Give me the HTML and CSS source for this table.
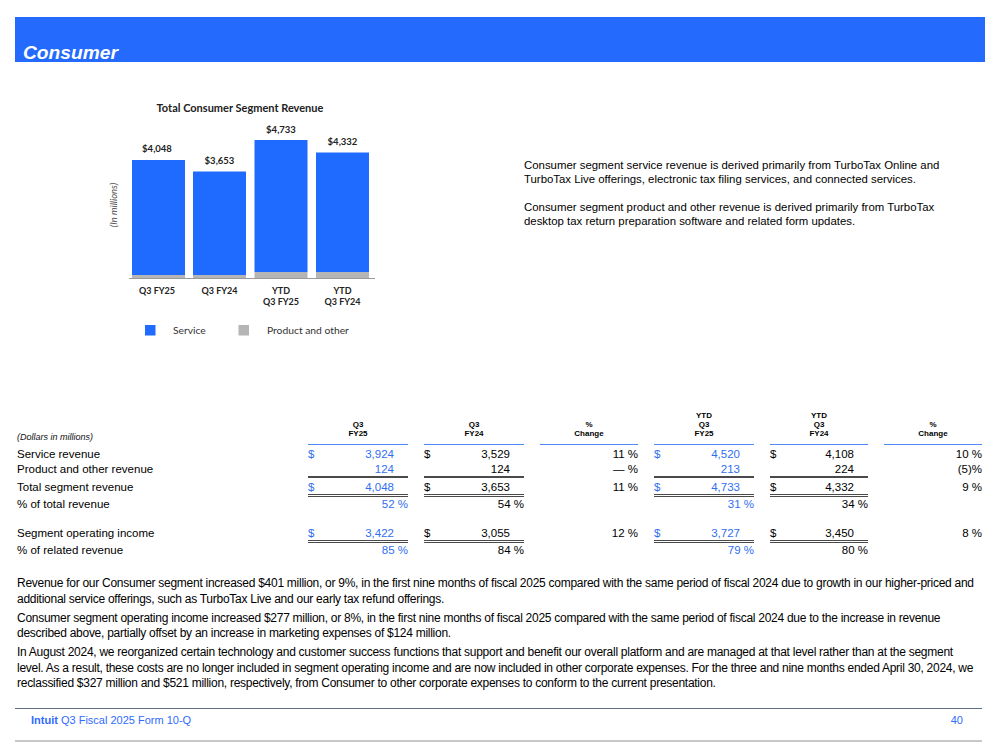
FILE: index.html
```html
<!DOCTYPE html>
<html lang="en">
<head>
<meta charset="utf-8">
<title>Consumer</title>
<link rel="stylesheet" href="styles.css">
</head>
<body>
<div class="page">
  <header class="band"><h1>Consumer</h1></header>

  <section class="top">
    <svg class="chart" width="280" height="250" viewBox="100 95 280 250" xmlns="http://www.w3.org/2000/svg">
      <text class="c-title" x="240" y="112" text-anchor="middle">Total Consumer Segment Revenue</text>
      <text class="c-axis" transform="translate(117 205) rotate(-90)" text-anchor="middle">(In millions)</text>

      <rect class="b-blue" x="132" y="160" width="53" height="115"/>
      <rect class="b-gray" x="132" y="275" width="53" height="3.5"/>
      <rect class="b-blue" x="193" y="171.5" width="53" height="103.5"/>
      <rect class="b-gray" x="193" y="275" width="53" height="3.5"/>
      <rect class="b-blue" x="254.5" y="140" width="53" height="132"/>
      <rect class="b-gray" x="254.5" y="272" width="53" height="6.5"/>
      <rect class="b-blue" x="316" y="152.5" width="53" height="119.5"/>
      <rect class="b-gray" x="316" y="272" width="53" height="6.5"/>
      <line class="c-base" x1="129" y1="278.5" x2="375" y2="278.5"/>

      <text class="c-val" x="157" y="152" text-anchor="middle">$4,048</text>
      <text class="c-val" x="219.5" y="163.5" text-anchor="middle">$3,653</text>
      <text class="c-val" x="281" y="132.5" text-anchor="middle">$4,733</text>
      <text class="c-val" x="342.5" y="145" text-anchor="middle">$4,332</text>

      <text class="c-cat" x="157" y="293.5" text-anchor="middle">Q3 FY25</text>
      <text class="c-cat" x="219.5" y="293.5" text-anchor="middle">Q3 FY24</text>
      <text class="c-cat" x="281" y="293.5" text-anchor="middle">YTD</text>
      <text class="c-cat" x="281" y="305" text-anchor="middle">Q3 FY25</text>
      <text class="c-cat" x="342.5" y="293.5" text-anchor="middle">YTD</text>
      <text class="c-cat" x="342.5" y="305" text-anchor="middle">Q3 FY24</text>

      <rect class="b-blue" x="145" y="325" width="10.5" height="10.5"/>
      <text class="c-leg" x="173" y="334">Service</text>
      <rect class="b-gray" x="238.5" y="325" width="10.5" height="10.5"/>
      <text class="c-leg" x="267" y="334">Product and other</text>
    </svg>

    <div class="desc">
      <p>Consumer segment service revenue is derived primarily from TurboTax Online and TurboTax Live offerings, electronic tax filing services, and connected services.</p>
      <p>Consumer segment product and other revenue is derived primarily from TurboTax desktop tax return preparation software and related form updates.</p>
    </div>
  </section>

  <section class="fin">
    <div class="hd lab"><span class="dim">(Dollars in millions)</span></div>
    <div class="hd col"><span>Q3</span><span>FY25</span></div>
    <div class="hd col"><span>Q3</span><span>FY24</span></div>
    <div class="hd col"><span>%</span><span>Change</span></div>
    <div class="hd col"><span>YTD</span><span>Q3</span><span>FY25</span></div>
    <div class="hd col"><span>YTD</span><span>Q3</span><span>FY24</span></div>
    <div class="hd col"><span>%</span><span>Change</span></div>

    <div class="r1 lab">Service revenue</div>
    <div class="r1 v blue"><span>$</span><span class="n">3,924</span></div>
    <div class="r1 v"><span>$</span><span class="n">3,529</span></div>
    <div class="r1 c">11 %</div>
    <div class="r1 v blue"><span>$</span><span class="n">4,520</span></div>
    <div class="r1 v"><span>$</span><span class="n">4,108</span></div>
    <div class="r1 c">10 %</div>

    <div class="r2 lab">Product and other revenue</div>
    <div class="r2 v blue ul"><span></span><span class="n">124</span></div>
    <div class="r2 v ul"><span></span><span class="n">124</span></div>
    <div class="r2 c">— %</div>
    <div class="r2 v blue ul"><span></span><span class="n">213</span></div>
    <div class="r2 v ul"><span></span><span class="n">224</span></div>
    <div class="r2 c">(5)%</div>

    <div class="r3 lab">Total segment revenue</div>
    <div class="r3 v blue dbl"><span>$</span><span class="n">4,048</span></div>
    <div class="r3 v dbl"><span>$</span><span class="n">3,653</span></div>
    <div class="r3 c">11 %</div>
    <div class="r3 v blue dbl"><span>$</span><span class="n">4,733</span></div>
    <div class="r3 v dbl"><span>$</span><span class="n">4,332</span></div>
    <div class="r3 c">9 %</div>

    <div class="r4 lab">% of total revenue</div>
    <div class="r4 c blue">52 %</div>
    <div class="r4 c">54 %</div>
    <div class="r4 c"></div>
    <div class="r4 c blue">31 %</div>
    <div class="r4 c">34 %</div>
    <div class="r4 c"></div>

    <div class="r5 lab">Segment operating income</div>
    <div class="r5 v blue dbl"><span>$</span><span class="n">3,422</span></div>
    <div class="r5 v dbl"><span>$</span><span class="n">3,055</span></div>
    <div class="r5 c">12 %</div>
    <div class="r5 v blue dbl"><span>$</span><span class="n">3,727</span></div>
    <div class="r5 v dbl"><span>$</span><span class="n">3,450</span></div>
    <div class="r5 c">8 %</div>

    <div class="r6 lab">% of related revenue</div>
    <div class="r6 c blue">85 %</div>
    <div class="r6 c">84 %</div>
    <div class="r6 c"></div>
    <div class="r6 c blue">79 %</div>
    <div class="r6 c">80 %</div>
    <div class="r6 c"></div>
  </section>

  <section class="notes">
    <p>Revenue for our Consumer segment increased $401 million, or 9%, in the first nine months of fiscal 2025 compared with the same period of fiscal 2024 due to growth in our higher-priced and additional service offerings, such as TurboTax Live and our early tax refund offerings.</p>
    <p>Consumer segment operating income increased $277 million, or 8%, in the first nine months of fiscal 2025 compared with the same period of fiscal 2024 due to the increase in revenue described above, partially offset by an increase in marketing expenses of $124 million.</p>
    <p>In August 2024, we reorganized certain technology and customer success functions that support and benefit our overall platform and are managed at that level rather than at the segment level. As a result, these costs are no longer included in segment operating income and are now included in other corporate expenses. For the three and nine months ended April 30, 2024, we reclassified $327 million and $521 million, respectively, from Consumer to other corporate expenses to conform to the current presentation.</p>
  </section>

  <footer class="foot">
    <span><b>Intuit</b> Q3 Fiscal 2025 Form 10-Q</span>
    <span>40</span>
  </footer>
  <div class="foot-rule"></div>
</div>
</body>
</html>
```

FILE: styles.css
```css
* { box-sizing: border-box; }
html, body { margin: 0; padding: 0; background: #fff; }
body {
  font-family: "Liberation Sans", Arial, sans-serif;
  color: #111;
}
.page { width: 999px; height: 756px; overflow: hidden; padding-top: 17px; }

.band {
  margin-left: 15px;
  width: 970px;
  height: 45px;
  background: #246bfd;
  display: flex;
  align-items: flex-end;
  padding-left: 8px;
}
.band h1 {
  margin: 0;
  font-size: 19.2px;
  line-height: 19px;
  font-weight: bold;
  font-style: italic;
  color: #fff;
}

.top { display: flex; align-items: flex-start; }
.chart { display: block; margin-left: 100px; margin-top: 33px; flex: none; }
.c-title { font-family: Lato, "Open Sans", sans-serif; font-weight: bold; font-size: 11px; fill: #222; }
.c-axis { font-family: Lato, "Open Sans", sans-serif; font-style: italic; font-size: 9.5px; fill: #555; }
.c-val { font-family: Lato, "Open Sans", sans-serif; font-weight: bold; font-size: 9.5px; fill: #222; }
.c-cat { font-family: Lato, "Open Sans", sans-serif; font-weight: bold; font-size: 9px; fill: #222; }
.c-leg { font-family: Lato, "Open Sans", sans-serif; font-size: 10.3px; fill: #333; }
.b-blue { fill: #1f6bff; }
.b-gray { fill: #b5b5b5; }
.c-base { stroke: #9a9a9a; stroke-width: 1; }

.desc {
  margin-left: 144px;
  margin-top: 95.5px;
  width: 430px;
  font-size: 11.4px;
  line-height: 14px;
  color: #000;
}
.desc p { margin: 0 0 14px; }

.fin {
  margin-top: 67px;
  margin-left: 17px;
  display: grid;
  grid-template-columns: 275px 100px 100px 98px 100px 98px 98px;
  column-gap: 16px;
  font-size: 11.5px;
  line-height: 14px;
  color: #000;
}
.hd {
  height: 33px;
  display: flex;
  flex-direction: column;
  justify-content: flex-end;
}
.hd.col {
  border-bottom: 1px solid #4f87f5;
  padding-bottom: 5px;
  align-items: center;
  font-size: 8px;
  line-height: 8.9px;
  font-weight: bold;
}
.hd.lab { padding-bottom: 3px; }
.dim { font-size: 9px; line-height: 10px; font-style: italic; color: #111; }

.v { display: flex; justify-content: space-between; }
.v .n { padding-right: 14px; }
.c { text-align: right; }
.blue { color: #2f6ef2; }
.ul { border-bottom: 2px solid #4a4a4a; }
.dbl { border-bottom: 3px double #4a4a4a; }

.r1 { padding-top: 2px; }
.r2 { padding-top: 1px; }
.r3 { padding-top: 2px; }
.r5 { padding-top: 15px; }

.notes {
  margin: 19px 17px 0;
  font-size: 12px;
  letter-spacing: -0.27px;
  line-height: 15.5px;
  color: #000;
}
.notes p { margin: 0 0 3.5px; }

.foot {
  margin: 16px 17px 0 15px;
  border-top: 1.5px solid #5d6f85;
  padding: 4px 19px 13.5px 16px;
  display: flex;
  justify-content: space-between;
  font-size: 11px;
  line-height: 14px;
  color: #2f6bff;
}
.foot b { font-weight: bold; }
.foot-rule { margin: 0 17px 0 15px; height: 2px; background: #c8c8c8; }
```
